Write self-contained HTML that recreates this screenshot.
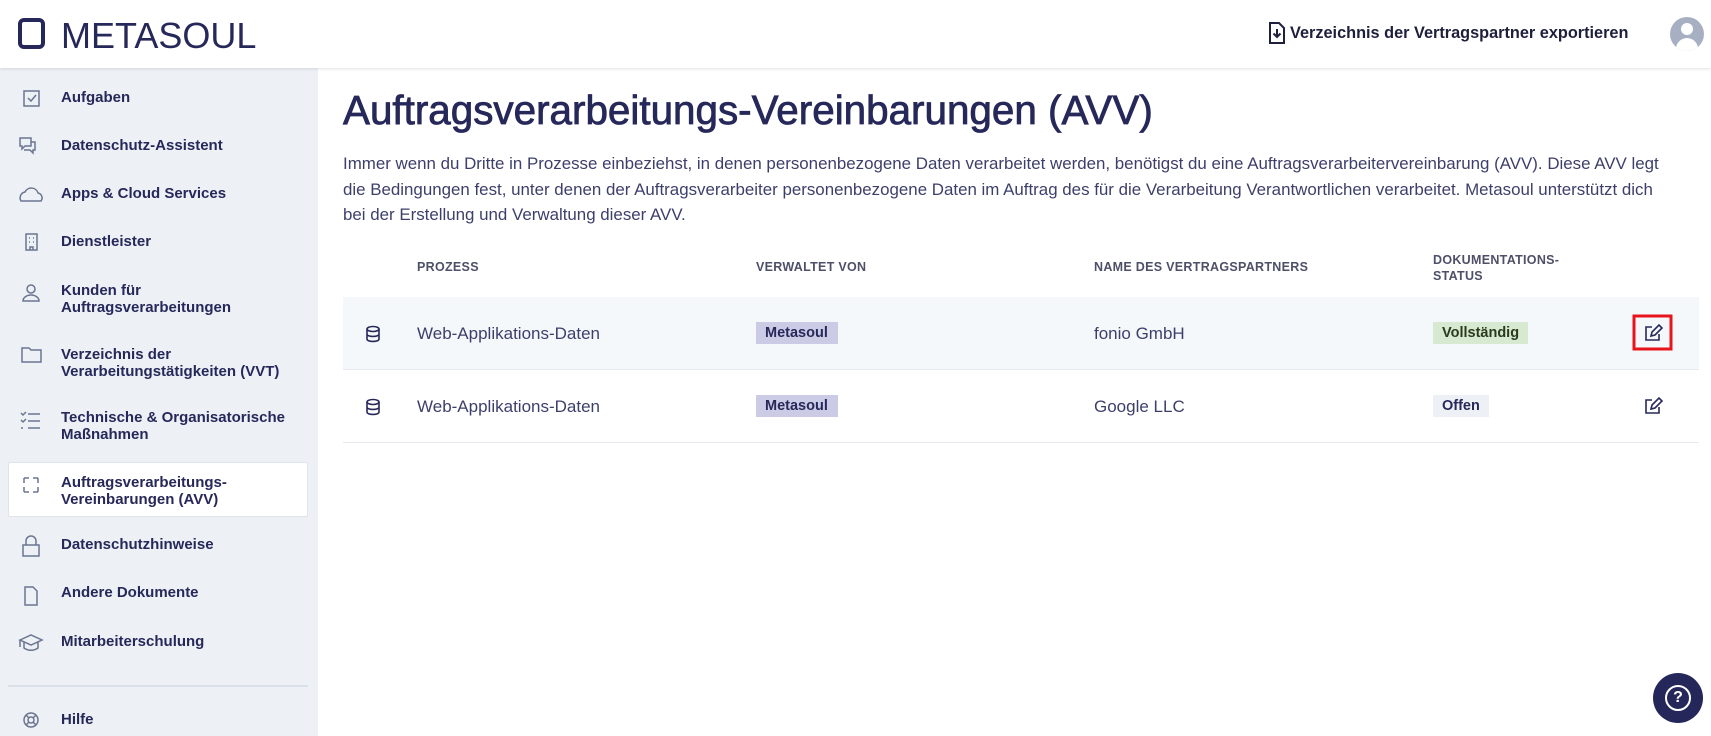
<!DOCTYPE html>
<html><head><meta charset="utf-8"><style>
*{box-sizing:border-box;margin:0;padding:0}
body{width:1711px;height:736px;overflow:hidden;background:#fff;font-family:"Liberation Sans",sans-serif;color:#27285a;position:relative}
.hdr{position:absolute;left:0;top:0;width:1711px;height:68px;background:#fff;box-shadow:0 1px 3px rgba(0,0,0,.12);z-index:2}
.logo{position:absolute;left:18px;top:18px;width:27px;height:31px;border:4.5px solid #27285a;border-radius:6px}
.logot{position:absolute;left:61px;top:15px;font-size:36px;letter-spacing:0px;color:#27285a}
.exp{position:absolute;left:1268px;top:24px;font-size:16.3px;color:#1e1f3a;font-weight:bold}
.exp svg{position:absolute;left:0;top:-2px}
.avatar{position:absolute;left:1670px;top:17px;width:34px;height:34px;border-radius:50%;background:#a7b0c2;overflow:hidden}
.side{position:absolute;left:0;top:68px;width:318px;height:668px;background:#edf1f6}
.it{position:absolute;left:61px;font-size:15px;font-weight:bold;line-height:17px;color:#27285a}
.active{position:absolute;left:8px;top:394px;width:300px;height:55px;background:#fff;border:1px solid #dfe4ec;border-radius:2px}
h1{position:absolute;left:343px;top:87px;font-size:40.4px;font-weight:normal;white-space:nowrap;letter-spacing:0px;color:#27285a;-webkit-text-stroke:0.8px #27285a}
.p{position:absolute;left:343px;top:151px;white-space:nowrap;font-size:16.9px;line-height:25.5px;color:#3d3f6b}
.th{position:absolute;font-size:12.5px;font-weight:bold;color:#4d5068;letter-spacing:0.3px;line-height:16px}
.row{position:absolute;left:343px;width:1356px;height:73px;border-bottom:1px solid #e6eaf0}
.td{position:absolute;font-size:17px;color:#3d3f6b}
.badge{position:absolute;font-size:14.5px;font-weight:bold;padding:3px 9px;color:#27285a}
.help{position:absolute;left:1653px;top:673px;width:50px;height:50px;border-radius:50%;background:#25275a}
</style></head><body>
<div class="hdr">
 <div class="logo"></div><div class="logot">METASOUL</div>
 <div class="exp"><svg width="18" height="22" viewBox="0 0 18 22"><path d="M2 1h9l5 5v15H2z" fill="none" stroke="#1e1f3a" stroke-width="2"/><path d="M9 7v8M5.5 11.5L9 15l3.5-3.5" fill="none" stroke="#1e1f3a" stroke-width="2"/></svg><span style="margin-left:22px">Verzeichnis der Vertragspartner exportieren</span></div>
 <div class="avatar"><div style="position:absolute;left:11px;top:6px;width:12px;height:12px;border-radius:50%;background:#fff"></div><div style="position:absolute;left:6px;top:21px;width:22px;height:16px;border-radius:11px 11px 0 0;background:#fff"></div></div>
</div>
<div class="side">
 <div class="active"></div>
</div>
<svg style="position:absolute;left:0;top:0" width="318" height="736" fill="none" stroke="#6b7590" stroke-width="1.5">
 <rect x="24" y="91" width="15" height="15"/><path d="M28 98l3 3 5-6"/>
 <path d="M20 138h11v8h-6l-3 3v-3h-2z M31 142h4v8h-2v3l-3-3h-6"/>
 <path d="M21 201h20a5 5 0 0 0-3-8a7 7 0 0 0-13-1a6 6 0 0 0-4 9z"/>
 <rect x="26" y="234" width="11" height="16"/><path d="M29 238h1M33 238h1M29 242h1M33 242h1M30 250v-3h3v3"/>
 <circle cx="31" cy="289" r="4"/><path d="M23 301a8 6 0 0 1 16 0z"/>
 <path d="M22 348h7l2 2h10v12H22z"/>
 <path d="M21 413l2 2 3-3M21 420l2 2 3-3M21 428h2M28 414h12M28 421h12M28 428h12"/>
 <path d="M24 478h5M24 478v5M38 478h-5M38 478v5M24 492h5M24 492v-5M38 492h-5M38 492v-5"/>
 <rect x="23" y="545" width="16" height="11"/><path d="M26 545v-4a5 5 0 0 1 10 0v4"/>
 <path d="M25 587h8l4 4v14H25z"/>
 <path d="M20 640l11-5 11 5-11 5z M24 642v6c4 3 10 3 14 0v-6M20 640v7"/>
 <circle cx="31" cy="720" r="7"/><circle cx="31" cy="720" r="3"/><path d="M26 715l3 3M36 715l-3 3M26 725l3-3M36 725l-3-3"/>
 <line x1="8" y1="686" x2="308" y2="686" stroke="#c8cfdb" stroke-width="1"/>
</svg>
<div class="it" style="top:89px">Aufgaben</div>
<div class="it" style="top:137px">Datenschutz-Assistent</div>
<div class="it" style="top:185px">Apps &amp; Cloud Services</div>
<div class="it" style="top:233px">Dienstleister</div>
<div class="it" style="top:282px">Kunden für<br>Auftragsverarbeitungen</div>
<div class="it" style="top:346px">Verzeichnis der<br>Verarbeitungstätigkeiten (VVT)</div>
<div class="it" style="top:409px">Technische &amp; Organisatorische<br>Maßnahmen</div>
<div class="it" style="top:474px">Auftragsverarbeitungs-<br>Vereinbarungen (AVV)</div>
<div class="it" style="top:536px">Datenschutzhinweise</div>
<div class="it" style="top:584px">Andere Dokumente</div>
<div class="it" style="top:633px">Mitarbeiterschulung</div>
<div class="it" style="top:711px">Hilfe</div>

<h1>Auftragsverarbeitungs-Vereinbarungen (AVV)</h1>
<div class="p">Immer wenn du Dritte in Prozesse einbeziehst, in denen personenbezogene Daten verarbeitet werden, benötigst du eine Auftragsverarbeitervereinbarung (AVV). Diese AVV legt<br>die Bedingungen fest, unter denen der Auftragsverarbeiter personenbezogene Daten im Auftrag des für die Verarbeitung Verantwortlichen verarbeitet. Metasoul unterstützt dich<br>bei der Erstellung und Verwaltung dieser AVV.</div>

<div class="th" style="left:417px;top:259px">PROZESS</div>
<div class="th" style="left:756px;top:259px">VERWALTET VON</div>
<div class="th" style="left:1094px;top:259px">NAME DES VERTRAGSPARTNERS</div>
<div class="th" style="left:1433px;top:252px">DOKUMENTATIONS-<br>STATUS</div>

<div class="row" style="top:297px;background:#f5f8fb"></div>
<div class="row" style="top:370px"></div>
<svg style="position:absolute;left:0;top:0" width="1711" height="736" fill="none" stroke="#27285a" stroke-width="1.6">
 <g><ellipse cx="373" cy="329" rx="6" ry="2.5"/><path d="M367 329v10c0 3.3 12 3.3 12 0v-10M367 334c0 3.3 12 3.3 12 0"/></g>
 <g transform="translate(0,73)"><ellipse cx="373" cy="329" rx="6" ry="2.5"/><path d="M367 329v10c0 3.3 12 3.3 12 0v-10M367 334c0 3.3 12 3.3 12 0"/></g>
 <g><path d="M1652 327h-6v13h13v-6"/><path d="M1651 336l1-4 7-7 3 3-7 7z"/></g>
 <g transform="translate(0,73)"><path d="M1652 327h-6v13h13v-6"/><path d="M1651 336l1-4 7-7 3 3-7 7z"/></g>
 <rect x="1634" y="316" width="37" height="33" stroke="#e8141c" stroke-width="3"/>
</svg>
<div class="td" style="left:417px;top:324px">Web-Applikations-Daten</div>
<div class="td" style="left:417px;top:397px">Web-Applikations-Daten</div>
<div class="badge" style="left:756px;top:322px;background:#cccbe6;width:82px">Metasoul</div>
<div class="badge" style="left:756px;top:395px;background:#cccbe6;width:82px">Metasoul</div>
<div class="td" style="left:1094px;top:324px">fonio GmbH</div>
<div class="td" style="left:1094px;top:397px">Google LLC</div>
<div class="badge" style="left:1433px;top:322px;background:#d8e9d1;color:#2a3a1e">Vollständig</div>
<div class="badge" style="left:1433px;top:395px;background:#edf1f6">Offen</div>

<div class="help"><div style="position:absolute;left:12px;top:12px;width:26px;height:26px;border:2.5px solid #fff;border-radius:50%;color:#fff;font-weight:bold;font-size:16px;text-align:center;line-height:21px">?</div></div>
</body></html>
